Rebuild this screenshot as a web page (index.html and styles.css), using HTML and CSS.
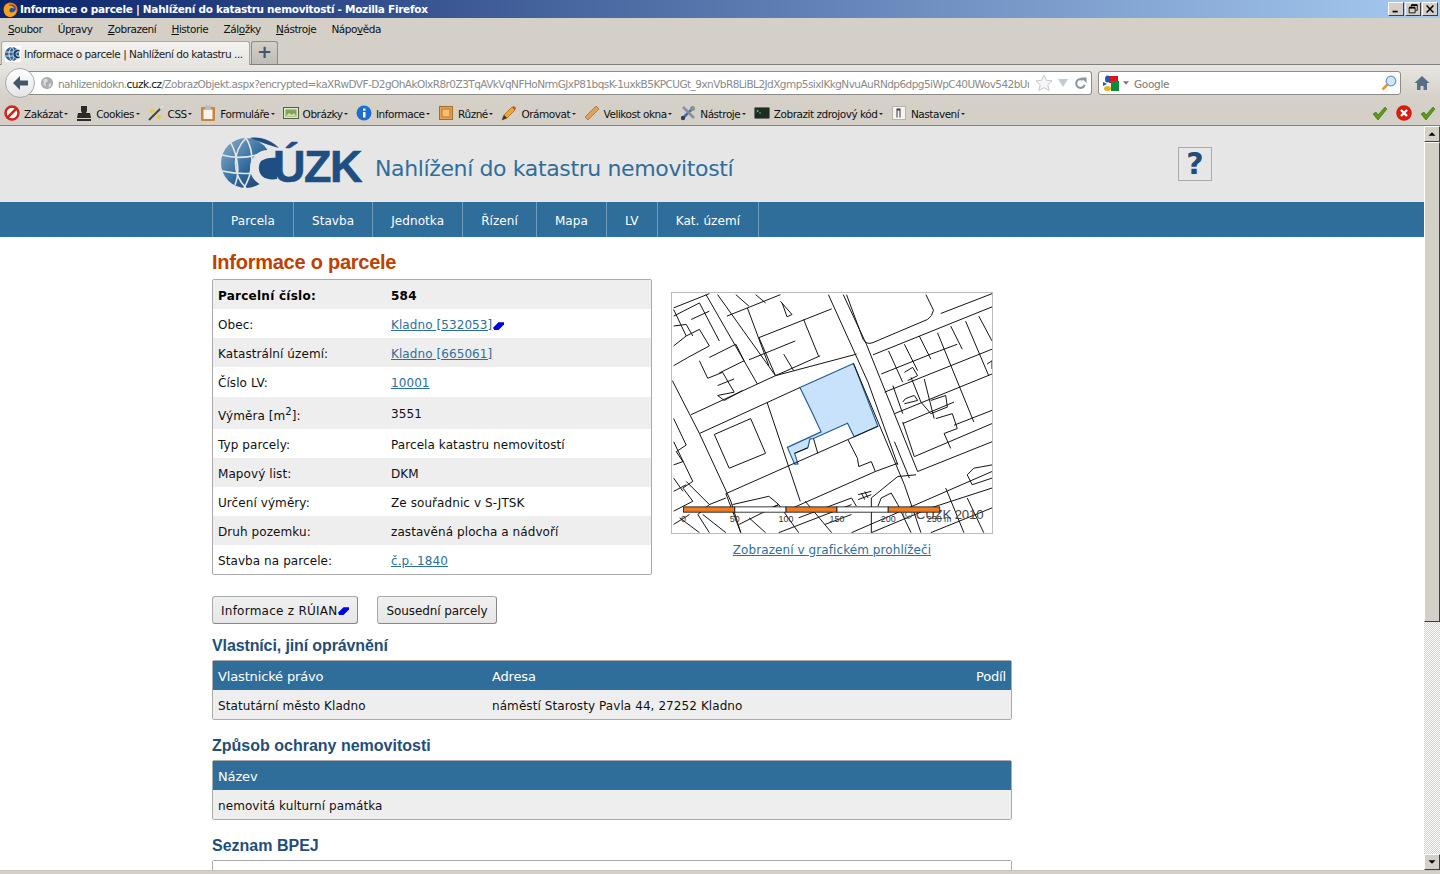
FILE: index.html
```html
<!DOCTYPE html>
<html lang="cs">
<head>
<meta charset="utf-8">
<title>Informace o parcele | Nahlížení do katastru nemovitostí - Mozilla Firefox</title>
<link rel="stylesheet" href="styles.css">
</head>
<body>
<div class="titlebar">
  <svg class="ff" viewBox="0 0 16 16"><circle cx="8" cy="8" r="7.5" fill="#e8701a"/><circle cx="9" cy="7.5" r="4.5" fill="#2a4f9a"/><path d="M1 9C1 4 4 1 8 1c-2 1-2 2-2 3 2-1 5 0 6 3-2-1-4-1-5 1s1 4 3 3c2 0 4-2 4-4 1 5-2 9-6 9-4 0-7-3-7-7z" fill="#f2a21c"/></svg>
  <span class="title-text">Informace o parcele | Nahlížení do katastru nemovitostí - Mozilla Firefox</span>
  <div class="winbtns">
    <span class="winbtn"><svg viewBox="0 0 16 14"><rect x="4" y="9" width="6" height="2" fill="#000"/></svg></span>
    <span class="winbtn"><svg viewBox="0 0 16 14"><path d="M6 2.5h7v6h-2M6 2.5v2M3.500 5.500h7v6h-7z" fill="none" stroke="#000" stroke-width="1"/><path d="M6 2.500h7M3.500 5.500h7" stroke="#000" stroke-width="2"/></svg></span>
    <span class="winbtn"><svg viewBox="0 0 16 14"><path d="M4 3l8 8M12 3l-8 8" stroke="#000" stroke-width="1.800"/></svg></span>
  </div>
</div>
<div class="menubar">
  <span><u>S</u>oubor</span><span>Úp<u>r</u>avy</span><span><u>Z</u>obrazení</span><span><u>H</u>istorie</span><span>Zál<u>o</u>žky</span><span><u>N</u>ástroje</span><span>Nápo<u>v</u>ěda</span>
</div>
<div class="tabstrip">
  <div class="tab">
    <svg class="ic fav" viewBox="0 0 16 16"><circle cx="7" cy="8" r="7" fill="#2f6190"/><path d="M1 6h12M1 10h12M7 1c-4 4-4 10 0 14M7 1c3 4 3 10 0 14" stroke="#fff" stroke-width=".8" fill="none"/><path d="M15 4c-4-2-7 1-7 4s3 6 7 4v-2c-2 1-4 0-4-2s2-3 4-2z" fill="#17406c" stroke="#fff" stroke-width=".6"/></svg>
    <span class="tab-text">Informace o parcele | Nahlížení do katastru ...</span>
  </div>
  <div class="newtab">+</div>
</div>
<div class="navbar">
  <div class="backbtn"><svg viewBox="0 0 20 20"><path d="M3 10l7-7v4.500h8v5h-8V17z" fill="#46566a"/></svg></div>
  <div class="urlbar">
    <svg class="ic globe" viewBox="0 0 16 16"><circle cx="8" cy="8" r="7" fill="#a9acb0"/><path d="M4 4l4-1 1 3-3 2 1 4-3-2zM10 9l3-1-1 4-2 1z" fill="#dcdcdc"/></svg>
    <div class="urltext">nahlizenidokn.<b>cuzk.cz</b>/ZobrazObjekt.aspx?encrypted=kaXRwDVF-D2gOhAkOlxR8r0Z3TqAVkVqNFHoNrmGJxP81bqsK-1uxkB5KPCUGt_9xnVbR8LiBL2JdXgmp5sixIKkgNvuAuRNdp6dpg5iWpC40UWov542bUr</div>
    <svg class="ic star" viewBox="0 0 18 18"><path d="M9 1l2.400 5.300 5.600.6-4.200 3.800 1.200 5.800L9 13.600 4 16.500l1.200-5.800L1 6.900l5.600-.6z" fill="#f6f6f6" stroke="#c4c8cc"/></svg>
    <svg class="drop" viewBox="0 0 10 8"><path d="M0 0h10L5 8z" fill="#c2cad2"/></svg>
    <svg class="ic reload" viewBox="0 0 14 14"><path d="M11.500 8.500A4.700 4.700 0 1 1 9.500 3" fill="none" stroke="#8796a6" stroke-width="2.200"/><path d="M7.500 0.500h6v6z" fill="#8796a6"/></svg>
  </div>
  <div class="searchbar">
    <svg class="ic" viewBox="0 0 16 16"><rect x="6" y="1" width="9" height="7" fill="#d9161c"/><rect x="8" y="6" width="8" height="10" fill="#0f8a3c"/><ellipse cx="4.500" cy="4" rx="2.500" ry="3.500" fill="#1a58b5"/><path d="M0 7l4 2-4 2z" fill="#1a58b5"/><ellipse cx="4.500" cy="13.500" rx="3.500" ry="2.500" fill="#f0b21c"/></svg>
    <svg class="drop small" viewBox="0 0 10 6"><path d="M0 0h10L5 6z" fill="#777"/></svg>
    <span class="engine">Google</span>
    <svg class="ic mag" viewBox="0 0 16 16"><path d="M6.500 9.500L1.500 14.500" stroke="#d9983a" stroke-width="2.500"/><circle cx="10" cy="6" r="4.800" fill="#cfe6fa" stroke="#6d9cc8" stroke-width="1.300"/></svg>
  </div>
  <svg class="ic home" viewBox="0 0 16 16"><path d="M8 1L0.500 8H3v7h3.500v-4h3v4H13V8h2.500z" fill="#566f86"/></svg>
</div>
<div class="devbar">
  <span class="dv"><svg class="ic" viewBox="0 0 16 16"><circle cx="8" cy="8" r="6.500" fill="#fff" stroke="#d3231c" stroke-width="2.500"/><path d="M3.500 12.500l9-9" stroke="#d3231c" stroke-width="2.500"/></svg><span class="lb">Zakázat</span></span>
  <span class="dv"><svg class="ic" viewBox="0 0 16 16"><path d="M5 1h6v5l-1 2h4l1 5H1l1-5h4L5 6zM1 14h14v2H1z" fill="#2b2a28"/></svg><span class="lb">Cookies</span></span>
  <span class="dv"><svg class="ic" viewBox="0 0 16 16"><path d="M1 15L13 3" stroke="#444" stroke-width="2"/><path d="M12 4l3-3" stroke="#ddd" stroke-width="2"/><path d="M4 3l1 2 2 1-2 1-1 2-1-2-2-1 2-1zM11 9l1 2 2 1-2 1-1 2-1-2-2-1 2-1z" fill="#f0c828"/></svg><span class="lb">CSS</span></span>
  <span class="dv"><svg class="ic" viewBox="0 0 16 16"><rect x="1" y="2" width="14" height="14" rx="1" fill="#c9853a"/><rect x="3.500" y="4.500" width="9" height="9.500" fill="#f6f4ee"/><rect x="5" y="0.500" width="6" height="4" fill="#b8bcc2"/></svg><span class="lb">Formuláře</span></span>
  <span class="dv"><svg class="ic" viewBox="0 0 16 16"><rect x="0.500" y="2.500" width="15" height="11" fill="#dfe8c8" stroke="#52604a"/><rect x="2.500" y="4.500" width="11" height="7" fill="#7fa25c"/><path d="M3 11l3-3 3 2 2-2 2 3z" fill="#e8d98c"/></svg><span class="lb">Obrázky</span></span>
  <span class="dv"><svg class="ic" viewBox="0 0 16 16"><circle cx="8" cy="8" r="7.500" fill="#1c6fd0"/><rect x="7" y="7" width="2.500" height="5.500" fill="#fff"/><rect x="7" y="3.500" width="2.500" height="2.200" fill="#fff"/></svg><span class="lb">Informace</span></span>
  <span class="dv"><svg class="ic" viewBox="0 0 16 16"><rect x="1.500" y="1.500" width="13" height="13" fill="#e8a24e" stroke="#a86a24"/><rect x="4" y="4" width="8" height="8" fill="#f2c078" stroke="#b87a30"/></svg><span class="lb">Různé</span></span>
  <span class="dv"><svg class="ic" viewBox="0 0 16 16"><path d="M1 15l2-5 8-8 3 3-8 8z" fill="#f0a828" stroke="#a86a20" stroke-width=".8"/><path d="M11 2l2-1 2 2-1 2z" fill="#d8453c"/><path d="M1 15l2-5 3 3z" fill="#333"/></svg><span class="lb">Orámovat</span></span>
  <span class="dv"><svg class="ic" viewBox="0 0 16 16"><path d="M1 12L12 1l3 3L4 15z" fill="#dca45a" stroke="#a8743a" stroke-width=".8"/></svg><span class="lb">Velikost okna</span></span>
  <span class="dv"><svg class="ic" viewBox="0 0 16 16"><path d="M2 14L12 4" stroke="#2a6fc8" stroke-width="2.500"/><path d="M3 2l11 11" stroke="#8a9098" stroke-width="2.500"/><circle cx="12.500" cy="3.500" r="2.500" fill="#8a9098"/><circle cx="3" cy="13" r="2.200" fill="#3a3f46"/></svg><span class="lb">Nástroje</span></span>
  <span class="dv"><svg class="ic" viewBox="0 0 16 16"><rect x="0.500" y="2.500" width="15" height="11" rx="1" fill="#1e2a22" stroke="#6c7268"/><path d="M2.500 5l2 1-2 1M5 8h2" stroke="#48c048" fill="none"/></svg><span class="lb">Zobrazit zdrojový kód</span></span>
  <span class="dv"><svg class="ic" viewBox="0 0 16 16"><rect x="1.500" y="1.500" width="13" height="13" fill="#f4f4f0" stroke="#b4b4ae"/><path d="M5.500 3.500h4v9h-1v-7h-2v7h-1z" fill="#3a3a3a"/></svg><span class="lb">Nastavení</span></span>
  <span class="dv-right">
    <svg class="ic" viewBox="0 0 16 16"><path d="M1 9l3-2 2 3 7-8 2 2-9 11z" fill="#5a9a16" stroke="#3a6a10" stroke-width=".6"/></svg>
    <svg class="ic" viewBox="0 0 16 16"><circle cx="8" cy="8" r="7.800" fill="#d81c10"/><path d="M5 5l6 6M11 5l-6 6" stroke="#fff" stroke-width="2.400"/></svg>
    <svg class="ic" viewBox="0 0 16 16"><path d="M1 9l3-2 2 3 7-8 2 2-9 11z" fill="#5a9a16" stroke="#3a6a10" stroke-width=".6"/></svg>
  </span>
</div>
<div class="viewport">
  <div class="page">
    <header class="head">
      <div class="wrap head-in">
        <div class="logo">
          <svg class="globe-logo" viewBox="0 0 60 52">
            <defs><linearGradient id="g" x1="0" y1="0" x2="1" y2="1"><stop offset="0" stop-color="#8fb0cc"/><stop offset=".55" stop-color="#2f6a9c"/><stop offset="1" stop-color="#173f6c"/></linearGradient></defs>
            <circle cx="26" cy="26" r="25" fill="url(#g)"/>
            <path d="M2 18c14 4 30 3 46-4M2 34c14 3 28 3 38 1M26 1c-14 14-14 36 0 50M26 1c9 14 7 35-2 50M11 6c7 14 9 30 4 42" stroke="#e6e6e6" stroke-width="1.600" fill="none"/>
            <circle cx="48" cy="31" r="18" fill="#e6e6e6"/>
            <path d="M41 24c4-3 11-4 17-3l-1 21c-6 1-12 0-15-3-4-4-4-11-1-15z" fill="#1f4f82"/>
            <path d="M30 1c11-2 22 3 29 10-9-3-20-6-29-10z" fill="#1f4f82"/>
          </svg>
          <span class="logo-text">ÚZK</span>
        </div>
        <div class="site-name">Nahlížení do katastru nemovitostí</div>
        <div class="help">?</div>
      </div>
    </header>
    <nav class="nav">
      <ul class="wrap nav-list">
        <li>Parcela</li><li>Stavba</li><li>Jednotka</li><li>Řízení</li><li>Mapa</li><li>LV</li><li>Kat. území</li>
      </ul>
    </nav>
    <main class="wrap main">
      <h1>Informace o parcele</h1>
      <div class="top">
        <table class="info">
          <tr class="odd bold"><td class="k">Parcelní číslo:</td><td>584</td></tr>
          <tr><td class="k">Obec:</td><td><a href="#">Kladno [532053]<svg class="ruian" viewBox="0 0 10 8"><path d="M0 6l5-5h5v2L5 8H1z" fill="#0000e6"/></svg></a></td></tr>
          <tr class="odd"><td class="k">Katastrální území:</td><td><a href="#">Kladno [665061]</a></td></tr>
          <tr class="r30"><td class="k">Číslo LV:</td><td><a href="#">10001</a></td></tr>
          <tr class="odd r32"><td class="k">Výměra [m<sup>2</sup>]:</td><td>3551</td></tr>
          <tr><td class="k">Typ parcely:</td><td>Parcela katastru nemovitostí</td></tr>
          <tr class="odd"><td class="k">Mapový list:</td><td>DKM</td></tr>
          <tr><td class="k">Určení výměry:</td><td>Ze souřadnic v S-JTSK</td></tr>
          <tr class="odd"><td class="k">Druh pozemku:</td><td>zastavěná plocha a nádvoří</td></tr>
          <tr><td class="k">Stavba na parcele:</td><td><a href="#">č.p. 1840</a></td></tr>
        </table>
        <figure class="mapfig">
          <svg class="map" viewBox="18 20 966 726">
            <path class="parcel" d="M404 306L566 233 640 423 568 455 548 414 445 460 434 462 428 488 388 505 398 537 388 538 366 487 468 440 440 380z"/>
            <path class="ln" d="M18 285L100 445 195 650 225 745M75 388L330 270 575 205M100 445L404 306M566 233L720 600 770 745M490 25L610 290 700 540M535 25L605 175 760 560M545 25L595 160Q605 178 625 170L790 100Q805 90 808 72L785 25M625 207L985 62M830 82L985 22M120 25L275 295M155 25L330 270M183 90L345 25M245 65L310 240M280 155L500 68M280 155L330 270M250 222L390 165M330 270L465 210M355 205L385 255M415 100L460 210M345 45L380 85 365 92 350 50M210 25L250 60M270 25L300 50M22 65L130 22M22 90L100 50M22 70L60 150 100 130 130 180 65 215 22 240M60 150L22 180M100 50L160 165M75 100L130 75M22 120L60 115 80 150M100 225L125 278 170 260 205 320 155 330 175 345 230 315M130 215L210 175 235 225 160 262M155 300L205 280"/>
            <path class="ln" d="M145 448L255 400 300 505 190 550zM305 352L405 650M180 627L640 423M360 680L632 560M700 575L755 570M550 465L578 520 582 545 620 530 632 560 700 535M445 460L458 505M388 505L428 488M180 627L225 745M690 470L735 580"/>
            <path class="ln" d="M650 265L800 205 880 175M672 195L715 290M720 175L760 255M765 150L800 220M820 140L930 410M860 120L895 190M905 105L975 270M945 90L985 165M660 320L985 190M690 385L985 265M715 350Q720 338 735 335L750 330 760 345 720 355M770 350L800 385 850 365 845 330 800 345M780 280L810 400M815 400L865 385 880 430 840 445M715 415L870 350M840 445L860 490M715 410L750 515 985 415M870 420L985 375M970 235L985 225 985 250M720 260L745 245 760 270 730 285M685 300L715 385M740 275L770 350"/>
            <path class="ln" d="M560 745L985 560M760 560L985 470M910 570L930 550 985 540M910 570L925 600 985 580M700 575L620 640 620 745M640 665L650 640 680 625 700 660M620 745L800 670 985 610M800 745L985 670M910 640L960 745M580 630L620 620M590 625L600 645M600 620L610 640M580 645L620 630M845 610L900 745M700 660L740 745"/>
            <path class="ln" d="M22 400L60 480 30 500 50 530 22 540M22 470L80 590 50 610 80 650 22 680M60 590L130 660 95 690 130 745M22 580L50 620M110 690L180 745M200 660L310 635 340 660 290 680M220 720L340 660 400 745M420 650L500 745M400 700L560 640 575 665M340 745L560 660M22 620L60 600M40 700L100 745M22 720L70 690M130 660L180 640M250 700L300 745M480 720L560 690"/>
            <text class="copy" x="715" y="703">© ČÚZK 2010</text>
            <rect class="seg-o" x="52" y="667" width="155" height="16"/><rect class="seg-w" x="207" y="667" width="155" height="16"/><rect class="seg-o" x="362" y="667" width="154" height="16"/><rect class="seg-w" x="516" y="667" width="155" height="16"/><rect class="seg-o" x="671" y="667" width="156" height="16"/>
            <text class="sc" x="52" y="713">0</text><text class="sc" x="207" y="713">50</text><text class="sc" x="362" y="713">100</text><text class="sc" x="516" y="713">150</text><text class="sc" x="671" y="713">200</text><text class="sc" x="825" y="713">250 m</text>
          </svg>
          <figcaption><a href="#">Zobrazení v grafickém prohlížeči</a></figcaption>
        </figure>
      </div>
      <div class="buttons">
        <button class="btn wide">Informace z RÚIAN<svg class="ruian" viewBox="0 0 10 8"><path d="M0 6l5-5h5v2L5 8H1z" fill="#0000e6"/></svg></button>
        <button class="btn">Sousední parcely</button>
      </div>
      <h2 class="h-own">Vlastníci, jiní oprávnění</h2>
      <table class="grid">
        <tr class="gh"><th class="c1">Vlastnické právo</th><th>Adresa</th><th class="right">Podíl</th></tr>
        <tr class="gr"><td class="c1">Statutární město Kladno</td><td>náměstí Starosty Pavla 44, 27252 Kladno</td><td></td></tr>
      </table>
      <h2>Způsob ochrany nemovitosti</h2>
      <table class="grid">
        <tr class="gh"><th>Název</th></tr>
        <tr class="gr"><td>nemovitá kulturní památka</td></tr>
      </table>
      <h2>Seznam BPEJ</h2>
      <table class="grid">
        <tr class="gh plain"><th>&nbsp;</th></tr>
      </table>
    </main>
  </div>
  <aside class="scrollbar">
    <div class="sb-btn"><svg viewBox="0 0 16 16"><path d="M4 10l4-4 4 4z" fill="#000"/></svg></div>
    <div class="sb-thumb"></div>
    <div class="sb-track"></div>
    <div class="sb-btn"><svg viewBox="0 0 16 16"><path d="M4 6l4 4 4-4z" fill="#000"/></svg></div>
  </aside>
</div>
<div class="bottomstrip"></div>
</body>
</html>
```
FILE: styles.css
```css
* { box-sizing: border-box; }
html, body { margin: 0; padding: 0; height: 874px; overflow: hidden; background: #d4d0c8; }
body { font-family: "DejaVu Sans", sans-serif; font-size: 10.5px; color: #000; display: flex; flex-direction: column; width: 1440px; }
svg { display: block; flex: none; }
.ic { width: 16px; height: 16px; }

.titlebar { height: 18px; display: flex; align-items: center; padding-left: 3px; background: linear-gradient(90deg, #0a246a, #a6caf0); color: #fff; flex: none; }
.ff { width: 15px; height: 15px; margin-right: 2px; }
.title-text { font: bold 10.5px "DejaVu Sans", sans-serif; letter-spacing: -.29px; }
.winbtns { margin-left: auto; margin-right: 2px; display: flex; gap: 1px; }
.winbtn { width: 16px; height: 14px; background: #d4d0c8; border: 1px solid; border-color: #fff #404040 #404040 #fff; }
.winbtn svg { width: 14px; height: 12px; }

.menubar { height: 23px; display: flex; align-items: center; padding: 0 0 2px 8px; gap: 15.2px; color: #111; flex: none; letter-spacing: -.45px; }

.tabstrip { height: 24px; display: flex; align-items: flex-end; padding-left: 1px; gap: 1px; border-bottom: 1px solid #808080; flex: none; }
.tab { width: 249px; height: 24px; background: linear-gradient(#f4f3f0, #e6e4df); border: 1px solid #a8a8a4; border-bottom: 0; border-radius: 3px 3px 0 0; display: flex; align-items: center; padding-left: 3px; gap: 3px; letter-spacing: -.45px; margin-bottom: -1px; color: #222; }
.tab-text { white-space: nowrap; padding-top: 1px; }
.fav { background: #fff; }
.newtab { width: 27px; height: 23px; background: linear-gradient(#d4d0c8, #bfbcb5); border: 1px solid #8c8c88; border-bottom: 0; border-radius: 3px 3px 0 0; text-align: center; font: bold 18px/20px "DejaVu Sans", sans-serif; color: #46566a; }

.navbar { height: 34px; display: flex; align-items: center; background: linear-gradient(#e8e6e2, #d4d0c8); padding: 2px 0 0 5px; flex: none; }
.backbtn { width: 30px; height: 30px; border-radius: 50%; background: linear-gradient(#fff, #e4e4e4); border: 1px solid #a4a8ac; display: flex; align-items: center; justify-content: center; margin-right: -6px; position: relative; z-index: 1; }
.backbtn svg { width: 20px; height: 20px; }
.urlbar { width: 1063px; height: 24px; background: #fff; border: 1px solid #8c8c88; border-left: 0; border-radius: 0 3px 3px 0; display: flex; align-items: center; padding-left: 11px; }
.globe { width: 14px; height: 14px; margin-right: 4px; }
.urltext { width: 971px; flex: none; overflow: hidden; white-space: nowrap; color: #8a8a8a; letter-spacing: -.55px; line-height: 18px; padding-top: 1px; }
.urltext b { font-weight: normal; color: #111; }
.star { width: 18px; height: 18px; margin-left: 6px; }
.drop { width: 10px; height: 8px; margin-left: 5px; }
.drop.small { width: 6px; height: 4px; margin: 0 0 0 4px; }
.reload { width: 13px; height: 13px; margin-left: 6px; }
.searchbar { width: 303px; height: 24px; margin-left: 6px; background: #fff; border: 1px solid #8c8c88; border-radius: 3px; display: flex; align-items: center; padding: 0 3px 0 4px; }
.engine { color: #777; margin-left: 5px; letter-spacing: -.3px; padding-top: 1px; }
.mag { margin-left: auto; }
.home { margin-left: 13px; }

.devbar { height: 27px; display: flex; align-items: center; padding: 2px 4px 0; gap: 8px; border-bottom: 1px solid #808080; flex: none; }
.dv { display: flex; align-items: center; gap: 4px; color: #111; letter-spacing: -.47px; }
.lb { display: flex; align-items: center; padding-top: 1px; }
.lb::after { content: ""; margin-left: 1.500px; border: 2px solid transparent; border-top: 2.500px solid #222; border-bottom: 0; }
.dv-right { margin-left: auto; display: flex; gap: 8px; }

.viewport { flex: none; height: 744px; display: flex; overflow: hidden; background: #fff; }
.page { flex: 1; min-width: 0; overflow: hidden; color: #111; font: 12px "DejaVu Sans", sans-serif; letter-spacing: .08px; }
.wrap { width: 1000px; margin: 0 auto; }

.head { height: 76px; background: #e6e6e6; }
.head-in { display: flex; align-items: flex-start; height: 76px; }
.logo { display: flex; align-items: flex-start; margin: 11px 0 0 8px; }
.globe-logo { width: 60px; height: 52px; }
.logo-text { font: bold 45px/1 "Liberation Sans", sans-serif; color: #1f4f82; margin: 7px 0 0 -7px; letter-spacing: -1.5px; -webkit-text-stroke: .6px #1f4f82; }
.site-name { font: 22px/1 "DejaVu Sans", sans-serif; color: #2f6e9b; margin: 32px 0 0 14px; letter-spacing: -.37px; white-space: nowrap; }
.help { width: 34px; height: 34px; margin: 21px 0 0 auto; border: 1px solid #aaa; text-align: center; font: bold 30px/32px "DejaVu Sans", sans-serif; color: #1f4e79; }

.nav { height: 35px; background: #2f6e9b; }
.nav-list { list-style: none; padding: 0; display: flex; height: 35px; border-left: 1px solid #6f9dbd; }
.nav-list li { color: #fff; font-size: 12px; line-height: 38px; padding: 0 18px; border-right: 1px solid #6f9dbd; letter-spacing: .08px; }

.main { padding-bottom: 20px; }
h1 { font: bold 20px/24px "Liberation Sans", sans-serif; color: #c04000; margin: 13px 0 5px; letter-spacing: -.25px; }
.top { display: flex; align-items: flex-start; }
.info { width: 440px; height: 296px; border-collapse: separate; border-spacing: 0; border: 1px solid #aaa; border-radius: 2px; background: #fff; }
.info td { padding: 2px 0 0 5px; height: 29px; vertical-align: middle; }
.info td.k { width: 173px; }
.info .r30 td { height: 30px; padding-top: 1px; }
.info .r32 td { height: 32px; padding-top: 1px; }
.info .r32 td.k { padding-top: 5px; }
.odd td { background: #eee; }
.info .bold td { font-weight: bold; color: #000; letter-spacing: .25px; }
sup { font-size: 10px; line-height: 0; vertical-align: 5px; }
a { color: #2f6e9b; }
.ruian { display: inline-block; width: 11px; height: 9px; vertical-align: -1px; margin-left: 1px; }
.mapfig { margin: 13px 0 0 19px; width: 322px; }
.map { width: 322px; height: 242px; border: 1px solid #bbb; background: #fff; }
.map .ln { fill: none; stroke: #111; stroke-width: 3; }
.map .parcel { fill: #c8e2fc; stroke: #1f5a94; stroke-width: 3.500; }
.seg-o { fill: #f47a20; stroke: #111; stroke-width: 2.500; }
.seg-w { fill: #fff; stroke: #111; stroke-width: 2.500; }
.copy { font: 40px "Liberation Sans", sans-serif; fill: #444; letter-spacing: -.5px; }
.sc { font: 27px "Liberation Sans", sans-serif; fill: #333; letter-spacing: 0; text-anchor: middle; }
figcaption { text-align: center; margin-top: 8px; line-height: 16px; }

.buttons { display: flex; gap: 19px; margin-top: 21px; }
.btn { height: 28px; padding: 1px 8px 0; font: 12px "DejaVu Sans", sans-serif; letter-spacing: -.1px; color: #111; background: linear-gradient(#f0f0f0, #e6e6e6); border: 1px solid #aaa; border-right-color: #888; border-bottom-color: #888; border-radius: 3px; display: flex; align-items: center; }
.btn.wide { letter-spacing: .25px; }

h2 { font: bold 16px/20px "Liberation Sans", sans-serif; color: #1f4e79; margin: 16px 0 4px; letter-spacing: 0; }
.h-own { margin-top: 12px; letter-spacing: -.12px; }
.grid { width: 800px; border-collapse: separate; border-spacing: 0; border: 1px solid #aaa; border-radius: 2px; }
.grid th, .grid td { height: 29px; padding: 1px 5px 0; text-align: left; font-weight: normal; }
.grid td { padding-top: 2px; }
.gh th { background: #2f6e9b; color: #fff; font-size: 13px; letter-spacing: -.15px; }
.gh.plain th { background: #fff; }
.gr td { background: #eee; }
.c1 { width: 274px; }
.grid th.right { text-align: right; }

.scrollbar { width: 16px; flex: none; display: flex; flex-direction: column; }
.sb-btn { height: 16px; background: #d4d0c8; border: 1px solid; border-color: #fff #404040 #404040 #fff; }
.sb-btn svg { width: 14px; height: 14px; }
.sb-thumb { height: 480px; background: #d4d0c8; border: 1px solid; border-color: #fff #404040 #404040 #fff; }
.sb-track { flex: 1; background: repeating-conic-gradient(#d4d0c8 0 25%, #fff 0 50%) 0 0 / 2px 2px; }
.bottomstrip { flex: 1; background: #d4d0c8; border-top: 1px solid #c8c4bc; }
```
